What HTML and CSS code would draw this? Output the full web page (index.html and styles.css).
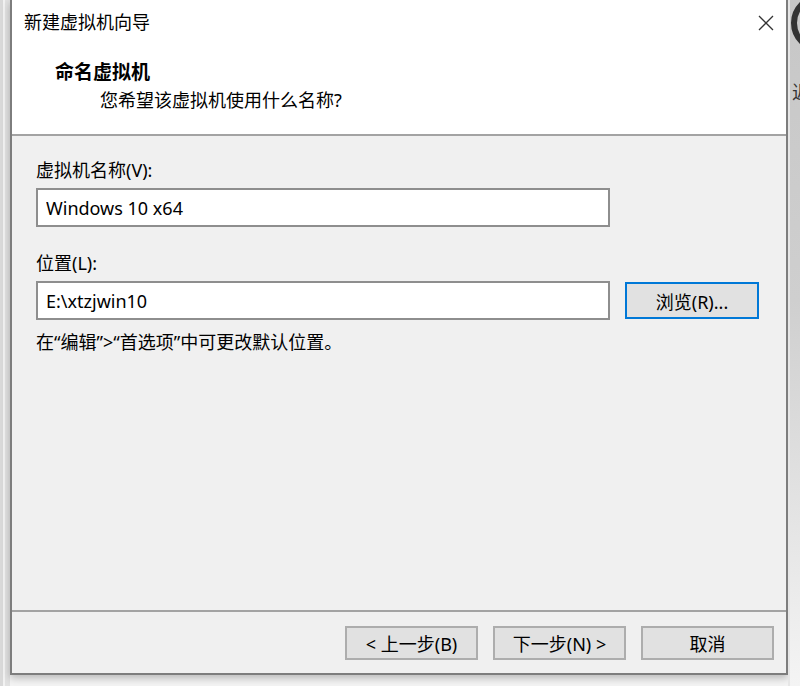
FILE: index.html
```html
<!DOCTYPE html>
<html lang="zh-CN">
<head>
    <meta charset="UTF-8">
    <title>新建虚拟机向导</title>
    <link rel="stylesheet" href="styles.css">
</head>
<body>
<div class="page">
    <div class="leftside"></div>
    <div class="dialog">
        <div class="head">
            <div class="titlebar">
                <div class="title">新建虚拟机向导</div>
                <svg class="close" width="16" height="16" viewBox="0 0 16 16">
                    <path d="M1 1 L15 15 M15 1 L1 15" stroke="#333" stroke-width="1.3" fill="none"/>
                </svg>
            </div>
            <div class="step">命名虚拟机</div>
            <div class="stepdesc">您希望该虚拟机使用什么名称?</div>
        </div>
        <div class="main">
            <div class="label">虚拟机名称(V):</div>
            <input class="field" type="text" value="Windows 10 x64">
            <div class="label label2">位置(L):</div>
            <div class="row">
                <input class="field" type="text" value="E:\xtzjwin10">
                <button class="btn browse">浏览(R)...</button>
            </div>
            <div class="note">在“编辑”&gt;“首选项”中可更改默认位置。</div>
        </div>
        <div class="foot">
            <button class="btn">&lt; 上一步(B)</button>
            <button class="btn">下一步(N) &gt;</button>
            <button class="btn">取消</button>
        </div>
    </div>
    <div class="rightside">
        <div class="ring"></div>
        <div class="peek">近</div>
    </div>
</div>
</body>
</html>
```
FILE: styles.css
```css
*{
    box-sizing: border-box;
}
html,body{
    margin:0;
    padding:0;
    height:100%;
}
body{
    background: #f4f4f4;
    font-family: "Noto Sans", "Noto Sans CJK SC", sans-serif;
    font-size: 18px;
    color: #000;
    overflow: hidden;
}
.page{
    display: flex;
    height:686px;
}
.leftside{
    width:10px;
    background: linear-gradient(to right, #d9d9d9 0, #d9d9d9 3px, #f2f2f2 3px, #f2f2f2 5px, #e2e2e2 5px);
}
.dialog{
    width:778px;
    height:675px;
    display: flex;
    flex-direction: column;
    border:2px solid #7d7d7d;
    border-top:0;
    background: #f0f0f0;
    box-shadow: 0 3px 8px rgba(0,0,0,0.25);
}
.head{
    background: #fff;
    height:136px;
    padding:10px 12px 0 12px;
    border-bottom:2px solid #a3a3a3;
}
.titlebar{
    display: flex;
    justify-content: space-between;
    align-items: center;
    height:24px;
    line-height: 24px;
}
.close{
    margin-top:2px;
}
.step{
    margin-top:26px;
    padding-left:31px;
    font-weight: bold;
    font-size: 19px;
    line-height: 24px;
}
.stepdesc{
    margin-top:4px;
    padding-left:76px;
    line-height: 24px;
}
.main{
    flex-grow: 1;
    padding:22px 24px 0 24px;
}
.label{
    line-height: 24px;
    margin-bottom:6px;
}
.label2{
    margin-top:24px;
}
.field{
    display: block;
    width:574px;
    height:39px;
    border:2px solid #8e8e8e;
    background: #fff;
    padding:0 8px;
    font-family: "Noto Sans", "Noto Sans CJK SC", sans-serif;
    font-size: 18px;
    color: #000;
    outline: 0;
}
.row{
    display: flex;
    align-items: center;
}
.btn{
    width:133px;
    height:34px;
    border:2px solid #adadad;
    background: #e1e1e1;
    font-family: "Noto Sans", "Noto Sans CJK SC", sans-serif;
    font-size: 18px;
    color: #000;
    padding:0;
}
.browse{
    margin-left:15px;
    width:134px;
    height:37px;
    border-color: #0078d7;
}
.note{
    margin-top:10px;
    line-height: 24px;
}
.foot{
    border-top:2px solid #a3a3a3;
    display: flex;
    justify-content: flex-end;
    gap:15px;
    padding:14px 12px 0 0;
    height:63px;
}
.rightside{
    width:12px;
    position: relative;
    overflow: hidden;
    border-left:2px solid #e6e6e6;
    background: linear-gradient(to bottom, #c7c7c7 0, #cfcfcf 300px, #ececec 600px, #f4f4f4 100%);
}
.ring{
    position: absolute;
    top:-6px;
    left:1px;
    width:58px;
    height:58px;
    border:6px solid #333;
    border-radius: 50%;
}
.peek{
    position: absolute;
    top:78px;
    left:2px;
    font-size: 18px;
    color: #333;
}
```
